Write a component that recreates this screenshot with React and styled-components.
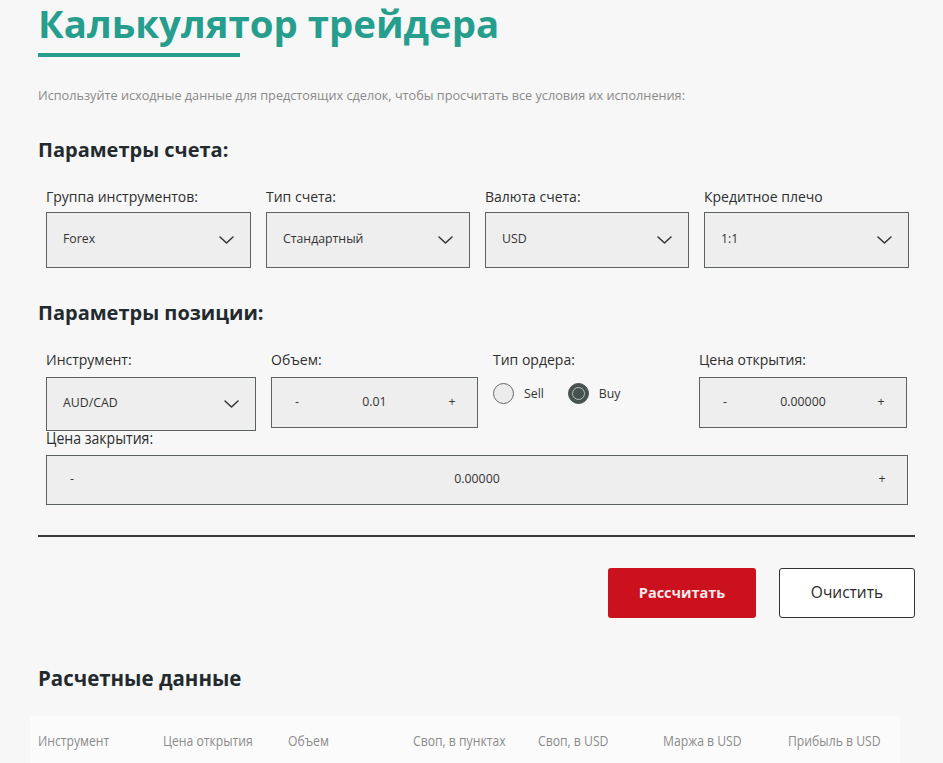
import React from "react";
import styled, { createGlobalStyle } from "styled-components";

const Global = createGlobalStyle`
  html, body { margin: 0; padding: 0; background: #f7f7f7; }
  body { font-family: "Open Sans", "Liberation Sans", sans-serif; color: #2a2a2a; }
  * { box-sizing: border-box; }
`;

const Page = styled.div`
  padding: 0 28px 40px 38px;
  width: 943px;
  overflow: hidden;
`;

const Title = styled.h1`
  margin: 0;
  font-size: 38.4px;
  line-height: 46px;
  font-weight: 700;
  color: #269e8e;
`;

const TitleBar = styled.div`
  margin-top: 7px;
  width: 202px;
  height: 4px;
  background: #269e8e;
`;

const Lead = styled.p`
  margin: 30px 0 0;
  font-size: 12.7px;
  line-height: 16px;
  color: #8a8a8a;
`;

const Heading = styled.h2`
  margin: ${(p) => p.$mt}px 0 0;
  font-size: 20px;
  line-height: 28px;
  height: 28px;
  font-weight: 700;
  color: #232a2e;
`;

const Grid = styled.div`
  margin-top: ${(p) => p.$mt}px;
  padding-left: 8px;
  display: grid;
  grid-template-columns: ${(p) => p.$cols};
  column-gap: 15px;
  align-items: start;
  width: 870px;
`;

const Field = styled.div`
  display: flex;
  flex-direction: column;
  gap: ${(p) => p.$gap || 5}px;
`;

const Label = styled.div`
  font-size: 14px;
  line-height: 20px;
  height: 20px;
  color: #2e2e2e;
  white-space: nowrap;
`;

const Narrow = styled.span`
  display: inline-block;
  vertical-align: top;
  font-size: ${(p) => p.$fs}px;
  transform: scaleX(${(p) => p.$sx || 0.86});
  transform-origin: left center;
  white-space: nowrap;
`;

const Select = styled.div`
  height: ${(p) => p.$h || 56}px;
  background: #eeeeee;
  border: 1px solid #5c6260;
  display: flex;
  align-items: center;
  justify-content: space-between;
  padding: 0 16px 0 16px;
  font-size: 12.3px;
  color: #333;
  & > span { margin-bottom: 3px; }
`;

const Stepper = styled.div`
  height: ${(p) => p.$h || 51}px;
  background: #eeeeee;
  border: 1px solid #5c6260;
  display: flex;
  align-items: center;
  justify-content: space-between;
  padding: 0 20px 3px;
  font-size: 12.3px;
  color: #333;
`;

const StepBtn = styled.span`
  width: 10px;
  text-align: center;
`;

const Radios = styled.div`
  display: flex;
  align-items: center;
  gap: 24px;
  padding-top: 9px;
`;

const RadioItem = styled.label`
  display: flex;
  align-items: center;
  gap: 10px;
  font-size: 12.3px;
  color: #333;
`;

const Dot = styled.span`
  width: 21px;
  height: 21px;
  border-radius: 50%;
  display: flex;
  align-items: center;
  justify-content: center;
  background: ${(p) => (p.$on ? "#45524f" : "#ececec")};
  border: 1px solid ${(p) => (p.$on ? "#45524f" : "#626866")};
  &::after {
    content: "";
    display: ${(p) => (p.$on ? "block" : "none")};
    width: 11px;
    height: 11px;
    border-radius: 50%;
    border: 1.5px solid #b7bfbd;
  }
`;

const Close = styled.div`
  margin-top: -3px;
  padding-left: 8px;
  width: 870px;
  display: flex;
  flex-direction: column;
  gap: 7px;
`;

const Divider = styled.hr`
  margin: 30px 0 0;
  border: 0;
  height: 2px;
  background: #3a3a3a;
  width: 877px;
`;

const Actions = styled.div`
  margin-top: 31px;
  width: 877px;
  display: flex;
  justify-content: flex-end;
  gap: 23px;
`;

const Button = styled.button`
  height: 50px;
  width: ${(p) => p.$w}px;
  border-radius: 3px;
  font-family: inherit;
  cursor: pointer;
  padding: 0 0 2px;
  ${(p) =>
    p.$primary
      ? `background:#cc111e;color:#f6e9ea;border:0;font-weight:700;font-size:14.5px;`
      : `background:#ffffff;color:#2a2a2a;border:1px solid #333;font-weight:400;font-size:15.5px;`}
`;

const Table = styled.div`
  margin: 25px 0 0 -8px;
  width: 870px;
  background: #fbfbfb;
  padding: 16px 8px 14px;
  display: grid;
  grid-template-columns: repeat(7, 125px);
`;

const Th = styled.div`
  line-height: 18px;
  height: 18px;
  color: #8b8b8b;
`;

const Chevron = () => (
  <svg width="15" height="8" viewBox="0 0 15 8" fill="none">
    <path d="M1 1l6.5 6 6.5-6" stroke="#333" strokeWidth="1.5" strokeLinecap="round" strokeLinejoin="round" />
  </svg>
);

const account = [
  ["Группа инструментов:", "Forex"],
  ["Тип счета:", "Стандартный"],
  ["Валюта счета:", "USD"],
  ["Кредитное плечо", "1:1"],
];

const heads = [
  "Инструмент",
  "Цена открытия",
  "Объем",
  "Своп, в пунктах",
  "Своп, в USD",
  "Маржа в USD",
  "Прибыль в USD",
];

export default function App() {
  return (
    <>
      <Global />
      <Page>
        <Title>Калькулятор трейдера</Title>
        <TitleBar />
        <Lead>Используйте исходные данные для предстоящих сделок, чтобы просчитать все условия их исполнения:</Lead>

        <Heading $mt={33}>Параметры счета:</Heading>
        <Grid $mt={23} $cols="205px 204px 204px 205px">
          {account.map(([l, v]) => (
            <Field key={l}>
              <Label>{l}</Label>
              <Select>
                <span>{v}</span>
                <Chevron />
              </Select>
            </Field>
          ))}
        </Grid>

        <Heading $mt={31}>Параметры позиции:</Heading>
        <Grid $mt={23} $cols="210px 207px 191px 208px">
          <Field $gap={7}>
            <Label>Инструмент:</Label>
            <Select $h={54}>
              <span>AUD/CAD</span>
              <Chevron />
            </Select>
          </Field>
          <Field $gap={7}>
            <Label>Объем:</Label>
            <Stepper>
              <StepBtn>-</StepBtn>
              <span>0.01</span>
              <StepBtn>+</StepBtn>
            </Stepper>
          </Field>
          <Field $gap={4}>
            <Label>Тип ордера:</Label>
            <Radios>
              <RadioItem>
                <Dot />
                Sell
              </RadioItem>
              <RadioItem>
                <Dot $on />
                Buy
              </RadioItem>
            </Radios>
          </Field>
          <Field $gap={7}>
            <Label>Цена открытия:</Label>
            <Stepper>
              <StepBtn>-</StepBtn>
              <span>0.00000</span>
              <StepBtn>+</StepBtn>
            </Stepper>
          </Field>
        </Grid>
        <Close>
          <Label>
            <Narrow $fs={16} $sx={0.88}>Цена закрытия:</Narrow>
          </Label>
          <Stepper $h={50}>
            <StepBtn>-</StepBtn>
            <span>0.00000</span>
            <StepBtn>+</StepBtn>
          </Stepper>
        </Close>

        <Divider />
        <Actions>
          <Button $primary $w={148}>Рассчитать</Button>
          <Button $w={136}>Очистить</Button>
        </Actions>

        <Heading $mt={45}>
          <Narrow $fs={22} $sx={0.93}>Расчетные данные</Narrow>
        </Heading>
        <Table>
          {heads.map((h) => (
            <Th key={h}>
              <Narrow $fs={14} $sx={0.87}>{h}</Narrow>
            </Th>
          ))}
        </Table>
      </Page>
    </>
  );
}
